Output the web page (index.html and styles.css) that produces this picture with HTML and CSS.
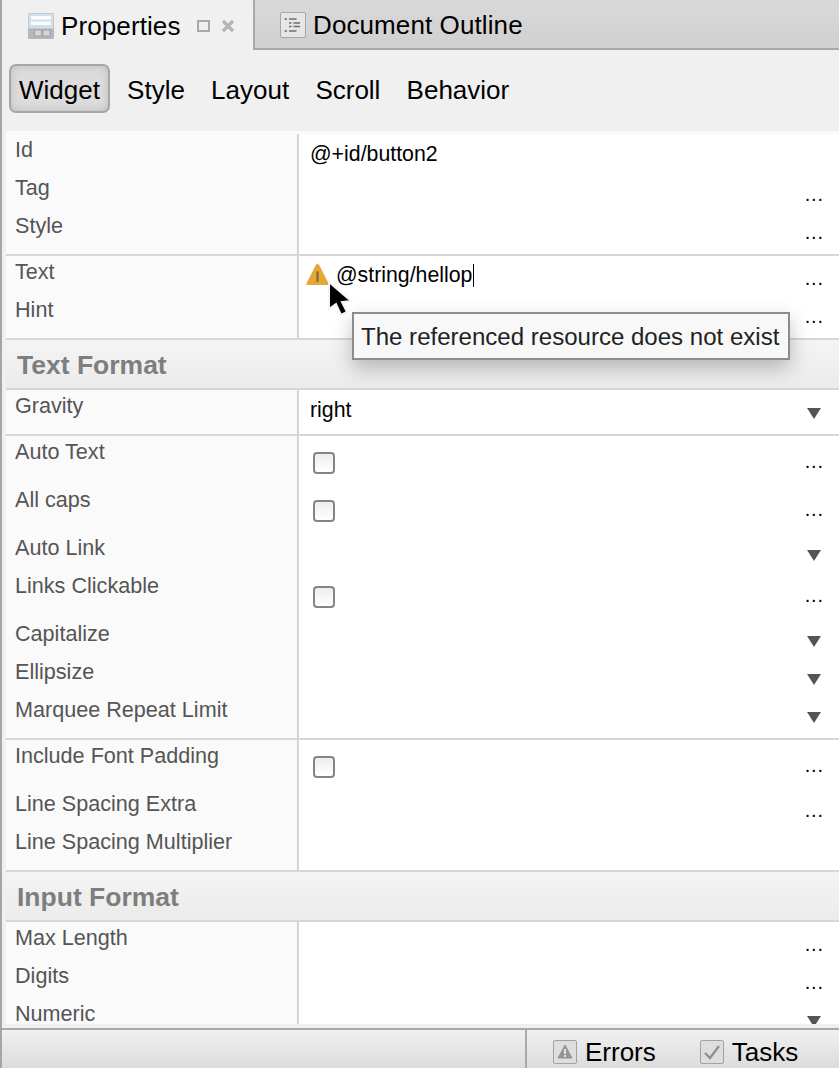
FILE: index.html
```html
<!DOCTYPE html>
<html lang="en">
<head>
    <meta charset="UTF-8">
    <meta name="viewport" content="width=device-width, initial-scale=1.0">
    <title>Properties</title>
    <link rel="stylesheet" href="styles.css">
</head>
<body>
    <div class="panel">
        <div class="tabs">
            <div class="tab tab-active">
                <svg class="tab-icon" viewBox="0 0 26 26">
                    <rect x="0" y="0" width="26" height="26" rx="1.5" fill="#b4b6b8"/>
                    <rect x="0.5" y="0.5" width="25" height="15" fill="#cfe0ea"/>
                    <rect x="3" y="3" width="20" height="3.5" fill="#fbfcfd"/>
                    <rect x="3" y="8.5" width="20" height="3.5" fill="#fbfcfd"/>
                    <rect x="6.5" y="17" width="7" height="6" fill="#d6d6d6" stroke="#9a9a9a" stroke-width="0.8"/>
                    <rect x="15" y="17" width="7" height="6" fill="#d6d6d6" stroke="#9a9a9a" stroke-width="0.8"/>
                </svg>
                <span class="tab-name">Properties</span>
                <svg class="tab-min" viewBox="0 0 13 12">
                    <rect x="1" y="1" width="11" height="10" fill="#eee" stroke="#a9a9a9" stroke-width="2"/>
                </svg>
                <svg class="tab-close" viewBox="0 0 14 14">
                    <path d="M2 2 L12 12 M12 2 L2 12" stroke="#b4b4b4" stroke-width="3.2"/>
                </svg>
            </div>
            <div class="tab tab-other">
                <svg class="tab-icon" viewBox="0 0 26 26">
                    <rect x="0.5" y="0.5" width="25" height="25" rx="1.5" fill="#e6e6e6" stroke="#a6a6a6"/>
                    <path d="M4.5 7h2.5M9 7h7.5M9 11h2.5M13.5 11h6.5M9 14.5h2.5M13.5 14.5h6.5M4.5 19h2.5M9 19h7.5" stroke="#707070" stroke-width="1.5"/>
                </svg>
                <span class="tab-name">Document Outline</span>
            </div>
        </div>

        <div class="toolbar">
            <div class="tool tool-on">Widget</div>
            <div class="tool">Style</div>
            <div class="tool">Layout</div>
            <div class="tool">Scroll</div>
            <div class="tool">Behavior</div>
        </div>

        <div class="sheet">
            <div class="group">
                <div class="row"><div class="label">Id</div><div class="value"><span class="text">@+id/button2</span></div></div>
                <div class="row"><div class="label">Tag</div><div class="value"><span class="dots">...</span></div></div>
                <div class="row"><div class="label">Style</div><div class="value"><span class="dots">...</span></div></div>
            </div>
            <div class="group">
                <div class="row">
                    <div class="label">Text</div>
                    <div class="value">
                        <svg class="warn" viewBox="0 0 22 22">
                            <path d="M11 1 Q12 1 12.6 2 L21.6 19.5 Q22.2 21 20.5 21 L1.5 21 Q-0.2 21 0.4 19.5 L9.4 2 Q10 1 11 1 Z" fill="#e5a835"/>
                            <rect x="10" y="8" width="2" height="10" fill="#77693f"/>
                        </svg>
                        <span class="text">@string/hellop<span class="caret"></span></span>
                        <span class="dots">...</span>
                    </div>
                </div>
                <div class="row"><div class="label">Hint</div><div class="value"><span class="dots">...</span></div></div>
            </div>
            <div class="section">Text Format</div>
            <div class="group">
                <div class="row"><div class="label">Gravity</div><div class="value"><span class="text text-low">right</span><span class="arrow"></span></div></div>
            </div>
            <div class="group">
                <div class="row row-tall"><div class="label">Auto Text</div><div class="value"><span class="check"></span><span class="dots">...</span></div></div>
                <div class="row row-tall"><div class="label">All caps</div><div class="value"><span class="check"></span><span class="dots">...</span></div></div>
                <div class="row"><div class="label">Auto Link</div><div class="value"><span class="arrow"></span></div></div>
                <div class="row row-tall"><div class="label">Links Clickable</div><div class="value"><span class="check"></span><span class="dots">...</span></div></div>
                <div class="row"><div class="label">Capitalize</div><div class="value"><span class="arrow"></span></div></div>
                <div class="row"><div class="label">Ellipsize</div><div class="value"><span class="arrow"></span></div></div>
                <div class="row"><div class="label">Marquee Repeat Limit</div><div class="value"><span class="arrow"></span></div></div>
            </div>
            <div class="group">
                <div class="row row-tall"><div class="label">Include Font Padding</div><div class="value"><span class="check"></span><span class="dots">...</span></div></div>
                <div class="row"><div class="label">Line Spacing Extra</div><div class="value"><span class="dots">...</span></div></div>
                <div class="row"><div class="label">Line Spacing Multiplier</div><div class="value"></div></div>
            </div>
            <div class="section">Input Format</div>
            <div class="group">
                <div class="row"><div class="label">Max Length</div><div class="value"><span class="dots">...</span></div></div>
                <div class="row"><div class="label">Digits</div><div class="value"><span class="dots">...</span></div></div>
                <div class="row"><div class="label">Numeric</div><div class="value"><span class="arrow"></span></div></div>
            </div>
        </div>

        <div class="statusbar">
            <div class="status-tabs">
                <div class="status-item">
                    <svg class="status-icon" viewBox="0 0 24 24">
                        <rect x="0.5" y="0.5" width="23" height="23" rx="1.5" fill="#dedede" stroke="#a2a2a2"/>
                        <path d="M12 5 L19 18 L5 18 Z" fill="#959595" stroke="#959595" stroke-linejoin="round"/>
                        <rect x="11" y="9" width="2" height="5" fill="#e4e4e4"/>
                        <rect x="11" y="15" width="2" height="2" fill="#e4e4e4"/>
                    </svg>
                    Errors
                </div>
                <div class="status-item">
                    <svg class="status-icon" viewBox="0 0 24 24">
                        <rect x="0.5" y="0.5" width="23" height="23" rx="1.5" fill="#dedede" stroke="#a2a2a2"/>
                        <path d="M5 13 L10 18 L19 6" fill="none" stroke="#8f8f8f" stroke-width="2.2"/>
                    </svg>
                    Tasks
                </div>
            </div>
        </div>

        <svg class="cursor" viewBox="0 0 26 38">
            <path d="M2 1 L2 28 L9 23 L14 34 L20 31 L15 21 L24 20 Z" fill="#000" stroke="#f4f4f4" stroke-width="2"/>
        </svg>
        <div class="tooltip">The referenced resource does not exist</div>
    </div>
</body>
</html>
```

FILE: styles.css
```css
/* General Styles */
html, body {
    margin: 0;
    padding: 0;
    height: 100%;
}

body {
    font-family: 'Liberation Sans', Arial, sans-serif;
    background-color: #f0f0f0;
    color: #000;
    overflow: hidden;
}

.panel {
    position: relative;
    display: flex;
    flex-direction: column;
    height: 100%;
    border-left: 2px solid #a3a5a7;
    box-sizing: border-box;
}

/* Tabs */
.tabs {
    display: flex;
    height: 50px;
    flex: none;
}

.tab {
    display: flex;
    align-items: center;
    box-sizing: border-box;
    font-size: 26px;
    letter-spacing: 0.1px;
    padding-top: 2px;
}

.tab-active {
    width: 253px;
    padding-left: 26px;
    background-color: #f0f0f0;
    border-right: 2px solid #a9a9a9;
}

.tab-other {
    flex: 1;
    padding-left: 25px;
    background: linear-gradient(#d9d9d9, #d0d0d0);
    border-bottom: 2px solid #a9a9a9;
}

.tab-icon {
    width: 26px;
    height: 26px;
    margin-right: 7px;
}

.tab-min {
    width: 13px;
    height: 12px;
    margin-left: 16px;
}

.tab-close {
    width: 14px;
    height: 14px;
    margin-left: 11px;
}

/* Toolbar */
.toolbar {
    display: flex;
    align-items: center;
    gap: 2.2px;
    height: 81px;
    flex: none;
    padding: 0 7px 4px;
    box-sizing: border-box;
    font-size: 26px;
}

.tool {
    padding: 0 10px;
    height: 49px;
    line-height: 48px;
    box-sizing: border-box;
    border: 2px solid transparent;
}

.tool-on {
    border: 2px solid #a6a6a6;
    border-radius: 7px;
    background: #dcdcdc;
    box-shadow: inset 0 0 9px #bcbcbc;
    padding: 0 8px;
    margin-right: 3px;
}

/* Property sheet */
.sheet {
    flex: 1;
    min-height: 0;
    overflow: hidden;
    margin: 0 0 4px 4px;
    padding-top: 3px;
    background-color: #fafafa;
}

.group {
    border-bottom: 2px solid #d6d6d6;
}

.group:last-child {
    border-bottom: none;
}

.row {
    display: flex;
    height: 38px;
}

.row-tall {
    height: 48px;
}

.group .row:last-child {
    height: 44px;
}

.group .row-tall:last-child {
    height: 54px;
}

.label {
    width: 291px;
    flex: none;
    padding-left: 9px;
    padding-top: 3px;
    box-sizing: border-box;
    background-color: #fafafa;
    color: #555;
    font-size: 21.6px;
    line-height: 26px;
}

.value {
    position: relative;
    flex: 1;
    border-left: 2px solid #d6d6d6;
    background-color: #fff;
    font-size: 21.3px;
}

.text {
    position: absolute;
    left: 11px;
    top: 7px;
    line-height: 26px;
    white-space: nowrap;
}

.text-low {
    top: 7px;
}

.warn {
    position: absolute;
    left: 7px;
    top: 7px;
    width: 23px;
    height: 23px;
}

.warn + .text {
    left: 37px;
    top: 6px;
}

.caret {
    display: inline-block;
    width: 1px;
    height: 23px;
    background-color: #000;
    vertical-align: -5px;
    margin-left: 1px;
}

.dots {
    position: absolute;
    right: 15px;
    top: 12px;
    font-size: 20px;
    line-height: 20px;
    letter-spacing: 0.9px;
}

.check {
    position: absolute;
    left: 14px;
    top: 16px;
    width: 22px;
    height: 22px;
    box-sizing: border-box;
    border: 2px solid #848484;
    border-radius: 4px;
    background: linear-gradient(#eee, #fff);
}

.row-tall .dots {
    top: 15px;
}

.arrow {
    position: absolute;
    right: 18px;
    top: 18px;
    width: 0;
    height: 0;
    border-left: 7px solid transparent;
    border-right: 7px solid transparent;
    border-top: 11px solid #555;
}

/* Section header */
.section {
    height: 50px;
    line-height: 50px;
    padding-left: 11px;
    box-sizing: border-box;
    border-bottom: 2px solid #d6d6d6;
    background: linear-gradient(#f4f4f4, #ebebeb);
    color: #7e7e7e;
    font-size: 26.5px;
    font-weight: bold;
}

/* Status bar */
.statusbar {
    display: flex;
    justify-content: flex-end;
    height: 40px;
    flex: none;
    box-sizing: border-box;
    border-top: 2px solid #a9a9a9;
    background: linear-gradient(#f0f0f0, #dcdcdc);
}

.status-tabs {
    display: flex;
    align-items: center;
    gap: 44px;
    width: 314px;
    padding: 6px 0 0 26px;
    box-sizing: border-box;
    border-left: 2px solid #a9a9a9;
}

.status-item {
    display: flex;
    align-items: center;
    gap: 8px;
    font-size: 26px;
}

.status-icon {
    width: 24px;
    height: 24px;
}

/* Overlays */
.cursor {
    position: absolute;
    left: 325px;
    top: 281px;
    width: 26px;
    height: 38px;
}

.tooltip {
    position: absolute;
    left: 350px;
    top: 312px;
    height: 48px;
    line-height: 45px;
    padding: 0 9px 0 7px;
    box-sizing: border-box;
    border: 2px solid #8c8c8c;
    background-color: #f8f8f8;
    color: #222;
    font-size: 24.05px;
    white-space: nowrap;
    box-shadow: 0 8px 20px rgba(0, 0, 0, 0.25);
}
```
